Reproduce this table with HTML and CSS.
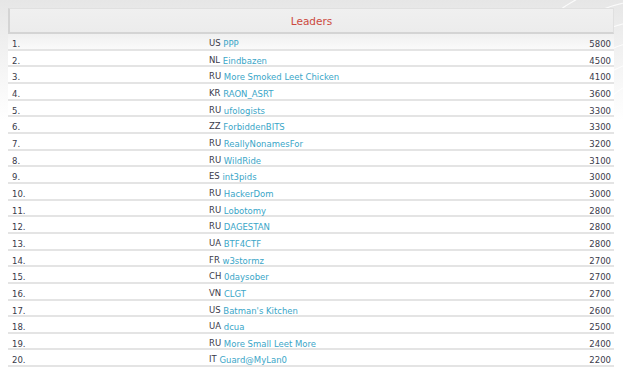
FILE: index.html
```html
<!DOCTYPE html>
<html>
<head>
<meta charset="utf-8">
<link rel="stylesheet" href="styles.css">
</head>
<body>
<svg class="deco" width="200" height="110" viewBox="0 0 200 110">
  <g fill="none" stroke="#ffffff" stroke-width="1.2" opacity="0.8">
    <circle cx="230" cy="140" r="60"/>
    <circle cx="230" cy="140" r="80"/>
    <circle cx="230" cy="140" r="100"/>
    <circle cx="230" cy="140" r="120"/>
    <circle cx="230" cy="140" r="140"/>
    <circle cx="230" cy="140" r="160"/>
  </g>
</svg>
<div class="board">
  <div class="head">Leaders</div>
  <div class="rows">
    <div class="row"><span class="n">1.</span><span class="team"><span class="cc">US</span> <a>PPP</a></span><span class="pts">5800</span></div>
    <div class="row"><span class="n">2.</span><span class="team"><span class="cc">NL</span> <a>Eindbazen</a></span><span class="pts">4500</span></div>
    <div class="row"><span class="n">3.</span><span class="team"><span class="cc">RU</span> <a>More Smoked Leet Chicken</a></span><span class="pts">4100</span></div>
    <div class="row"><span class="n">4.</span><span class="team"><span class="cc">KR</span> <a>RAON_ASRT</a></span><span class="pts">3600</span></div>
    <div class="row"><span class="n">5.</span><span class="team"><span class="cc">RU</span> <a>ufologists</a></span><span class="pts">3300</span></div>
    <div class="row"><span class="n">6.</span><span class="team"><span class="cc">ZZ</span> <a>ForbiddenBITS</a></span><span class="pts">3300</span></div>
    <div class="row"><span class="n">7.</span><span class="team"><span class="cc">RU</span> <a>ReallyNonamesFor</a></span><span class="pts">3200</span></div>
    <div class="row"><span class="n">8.</span><span class="team"><span class="cc">RU</span> <a>WildRide</a></span><span class="pts">3100</span></div>
    <div class="row"><span class="n">9.</span><span class="team"><span class="cc">ES</span> <a>int3pids</a></span><span class="pts">3000</span></div>
    <div class="row"><span class="n">10.</span><span class="team"><span class="cc">RU</span> <a>HackerDom</a></span><span class="pts">3000</span></div>
    <div class="row"><span class="n">11.</span><span class="team"><span class="cc">RU</span> <a>Lobotomy</a></span><span class="pts">2800</span></div>
    <div class="row"><span class="n">12.</span><span class="team"><span class="cc">RU</span> <a>DAGESTAN</a></span><span class="pts">2800</span></div>
    <div class="row"><span class="n">13.</span><span class="team"><span class="cc">UA</span> <a>BTF4CTF</a></span><span class="pts">2800</span></div>
    <div class="row"><span class="n">14.</span><span class="team"><span class="cc">FR</span> <a>w3stormz</a></span><span class="pts">2700</span></div>
    <div class="row"><span class="n">15.</span><span class="team"><span class="cc">CH</span> <a>0daysober</a></span><span class="pts">2700</span></div>
    <div class="row"><span class="n">16.</span><span class="team"><span class="cc">VN</span> <a>CLGT</a></span><span class="pts">2700</span></div>
    <div class="row"><span class="n">17.</span><span class="team"><span class="cc">US</span> <a>Batman's Kitchen</a></span><span class="pts">2600</span></div>
    <div class="row"><span class="n">18.</span><span class="team"><span class="cc">UA</span> <a>dcua</a></span><span class="pts">2500</span></div>
    <div class="row"><span class="n">19.</span><span class="team"><span class="cc">RU</span> <a>More Small Leet More</a></span><span class="pts">2400</span></div>
    <div class="row"><span class="n">20.</span><span class="team"><span class="cc">IT</span> <a>Guard@MyLan0</a></span><span class="pts">2200</span></div>
  </div>
</div>
</body>
</html>
```

FILE: styles.css
```css
html, body {
  margin: 0;
  padding: 0;
}
body {
  width: 623px;
  height: 369px;
  overflow: hidden;
  position: relative;
  background: linear-gradient(to bottom, #e6e6e6 0px, #f3f3f3 60px, #ffffff 120px, #ffffff 100%);
  font-family: "DejaVu Sans", Verdana, sans-serif;
  font-size: 8.5px;
  color: #444;
}
.deco {
  position: absolute;
  top: 0;
  right: 0;
}
.board {
  position: relative;
  margin: 8px 9px 0 8px;
  display: flex;
  flex-direction: column;
}
.head {
  height: 23px;
  display: flex;
  align-items: center;
  justify-content: center;
  border: 1px solid #e0e0e0;
  border-left: 2px solid #d4d4d4;
  border-bottom: 2px solid #d4d4d4;
  background: linear-gradient(to bottom, #f0f0f0, #ececec);
  color: #cc4a3e;
  font-size: 10.5px;
}
.rows {
  display: flex;
  flex-direction: column;
}
.row {
  box-sizing: border-box;
  height: 16.67px;
  padding-top: 5px;
  line-height: 10px;
  border-bottom: 2px solid #e4e4e4;
  display: grid;
  grid-template-columns: 197px 1fr auto;
  align-items: start;
  background: #fff;
}
.row:first-child {
  background: linear-gradient(to bottom, #f0f0f0, #fafafa);
}
.n {
  padding-left: 4px;
  color: #3a3a4a;
}
.team {
  padding-left: 4px;
  white-space: nowrap;
}
.cc {
  color: #3a3a4a;
  position: relative;
  top: -1px;
}
.team a {
  color: #3aa6c8;
  text-decoration: none;
}
.pts {
  padding-right: 3px;
  color: #3a3a4a;
}
```
